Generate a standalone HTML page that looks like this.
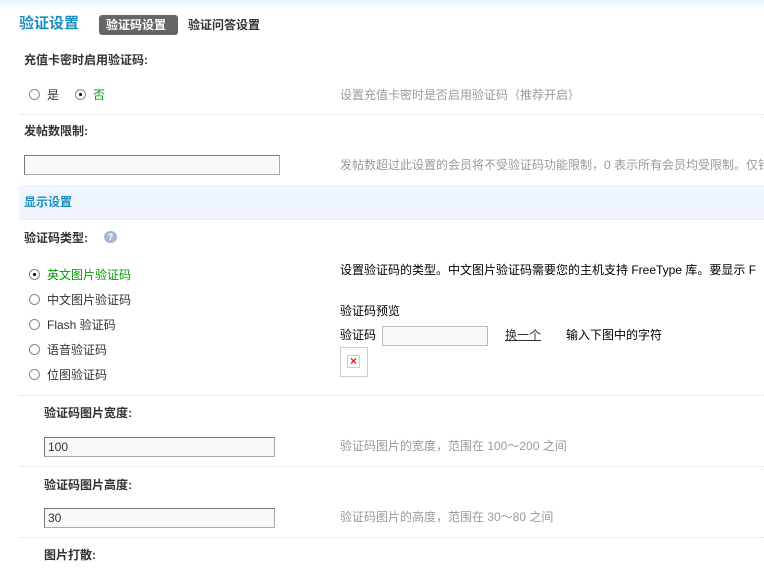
<!DOCTYPE html>
<html><head><meta charset="utf-8"><style>
*{margin:0;padding:0;box-sizing:border-box}
body{width:764px;height:570px;overflow:hidden;background:#fff;font:12px "Liberation Sans","Noto Sans CJK SC",sans-serif;color:#333;position:relative}
.a{position:absolute;white-space:nowrap;line-height:14px}
.b{font-weight:bold;color:#333}
.g{color:#999}
.hr{position:absolute;left:19px;right:0;height:0;border-top:1px dotted #ddd}
.inp{position:absolute;height:20px;border:1px solid #aaa;border-top-color:#777;border-left-color:#777;background:#f8f8f8;font-size:12px;padding:3px 3px;line-height:13px}
.r{position:absolute;width:11px;height:11px;border-radius:50%;border:1px solid #888;background:#fff}
.r.on::after{content:"";position:absolute;left:3px;top:3px;width:3px;height:3px;border-radius:50%;background:#000}
</style></head><body>
<div style="position:absolute;left:0;top:0;width:764px;height:10px;background:linear-gradient(#eaf3fa,#fff)"></div>
<div class="a" style="left:19px;top:15px;font-size:15px;line-height:18px;font-weight:bold;color:#1b8fc0">验证设置</div>
<div style="position:absolute;left:99px;top:15px;width:79px;height:20px;background:#666;border-radius:3px"></div>
<div class="a b" style="left:106px;top:18px;color:#fff">验证码设置</div>
<div class="a b" style="left:188px;top:18px">验证问答设置</div>

<div class="a b" style="left:24px;top:53px">充值卡密时启用验证码:</div>
<div class="r" style="left:29px;top:89px"></div><div class="a" style="left:47px;top:88px">是</div>
<div class="r on" style="left:75px;top:89px"></div><div class="a" style="left:93px;top:88px;color:#090">否</div>
<div class="a g" style="left:340px;top:88px">设置充值卡密时是否启用验证码（推荐开启）</div>
<div class="hr" style="top:114px"></div>

<div class="a b" style="left:24px;top:124px">发帖数限制:</div>
<div class="inp" style="left:24px;top:155px;width:256px"></div>
<div class="a g" style="left:340px;top:158px">发帖数超过此设置的会员将不受验证码功能限制，0 表示所有会员均受限制。仅针</div>

<div style="position:absolute;left:19px;top:185px;right:0;height:35px;background:#eef5fc;border-bottom:1px solid #e4eef7"></div>
<div class="a b" style="left:24px;top:195px;color:#1b8fc0">显示设置</div>

<div class="a b" style="left:24px;top:231px">验证码类型:</div>
<div style="position:absolute;left:104px;top:231px;width:13px;height:12px;border-radius:6px;background:#a9b6d4;color:#fff;font-size:9px;line-height:12px;text-align:center;font-weight:bold">?</div>

<div class="r on" style="left:29px;top:269px"></div><div class="a" style="left:47px;top:268px;color:#090">英文图片验证码</div>
<div class="r" style="left:29px;top:294px"></div><div class="a" style="left:47px;top:293px">中文图片验证码</div>
<div class="r" style="left:29px;top:319px"></div><div class="a" style="left:47px;top:318px">Flash 验证码</div>
<div class="r" style="left:29px;top:344px"></div><div class="a" style="left:47px;top:343px">语音验证码</div>
<div class="r" style="left:29px;top:369px"></div><div class="a" style="left:47px;top:368px">位图验证码</div>

<div class="a" style="left:340px;top:263px;color:#000">设置验证码的类型。中文图片验证码需要您的主机支持 FreeType 库。要显示 F</div>
<div class="a" style="left:340px;top:304px;color:#000">验证码预览</div>
<div class="a" style="left:340px;top:328px;color:#000">验证码</div>
<div class="inp" style="left:382px;top:326px;width:106px;border-color:#bbb"></div>
<div class="a" style="left:505px;top:328px;text-decoration:underline;color:#333">换一个</div>
<div class="a" style="left:566px;top:328px;color:#000">输入下图中的字符</div>
<div style="position:absolute;left:340px;top:347px;width:28px;height:30px;border:1px solid #ccc"></div>
<div style="position:absolute;left:347px;top:355px;width:13px;height:13px;border:1px solid #ccc;color:#d22;font-size:12px;line-height:11px;text-align:center;font-weight:bold">×</div>
<div class="hr" style="top:395px"></div>

<div class="a b" style="left:44px;top:406px">验证码图片宽度:</div>
<div class="inp" style="left:44px;top:437px;width:231px">100</div>
<div class="a g" style="left:340px;top:439px">验证码图片的宽度，范围在 100～200 之间</div>
<div class="hr" style="top:466px"></div>

<div class="a b" style="left:44px;top:478px">验证码图片高度:</div>
<div class="inp" style="left:44px;top:508px;width:231px">30</div>
<div class="a g" style="left:340px;top:510px">验证码图片的高度，范围在 30～80 之间</div>
<div class="hr" style="top:537px"></div>

<div class="a b" style="left:44px;top:548px">图片打散:</div>
</body></html>
